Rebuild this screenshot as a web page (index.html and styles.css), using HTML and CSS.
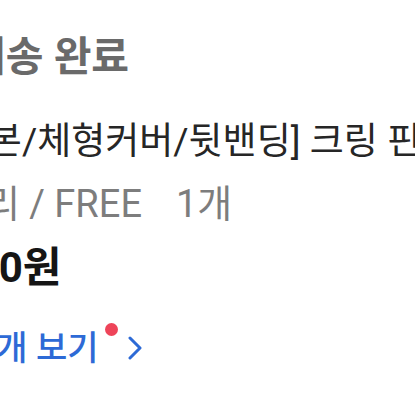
FILE: index.html
```html
<!DOCTYPE html>
<html lang="ko">
<head>
<meta charset="utf-8">
<link rel="stylesheet" href="styles.css">
</head>
<body>
<div class="order">
  <div class="status">배송 완료</div>
  <div class="name">[기본/체형커버/뒷밴딩] 크링 핀턱 와이드 팬츠</div>
  <div class="option">아이보리 / FREE<span class="qty">1개</span></div>
  <div class="price">39,900원</div>
  <div class="more">
    <span class="more-text">상품 1개 보기</span>
    <span class="dot"></span>
    <svg class="chev" width="14" height="26" viewBox="0 0 14 26"><polyline points="2,3 12,13 2,23" fill="none" stroke="#2d6ad6" stroke-width="3" stroke-linecap="round" stroke-linejoin="round"/></svg>
  </div>
</div>
</body>
</html>
```
FILE: styles.css
```css
html, body {
  margin: 0;
  padding: 0;
  background: #fff;
  overflow: hidden;
}
body {
  width: 415px;
  height: 415px;
  font-family: Roboto, "Noto Sans CJK KR", sans-serif;
}
.order {
  display: flex;
  flex-direction: column;
  padding-top: 32px;
  white-space: nowrap;
}
.status {
  height: 50px;
  line-height: 50px;
  font-size: 41px;
  font-weight: 700;
  color: #6a6a6a;
  margin-left: -32px;
}
.name {
  height: 50px;
  line-height: 50px;
  margin-top: 35px;
  font-size: 37px;
  color: #262626;
  margin-left: -56px;
}
.option {
  height: 50px;
  line-height: 50px;
  margin-top: 12px;
  font-size: 38px;
  color: #7d7d7d;
  margin-left: -120px;
}
.qty {
  margin-left: 34px;
}
.price {
  height: 50px;
  line-height: 50px;
  margin-top: 14px;
  font-size: 42px;
  font-weight: 700;
  color: #151515;
  margin-left: -108px;
}
.more {
  display: flex;
  align-items: center;
  height: 50px;
  margin-top: 27px;
  margin-left: -94px;
  color: #2d6ad6;
  font-size: 34px;
  font-weight: 500;
}
.dot {
  width: 13px;
  height: 13px;
  border-radius: 50%;
  background: #ee4459;
  align-self: flex-start;
  margin-top: 3px;
  margin-left: 6px;
}
.chev {
  margin-left: 10px;
  margin-top: 6px;
}
```
